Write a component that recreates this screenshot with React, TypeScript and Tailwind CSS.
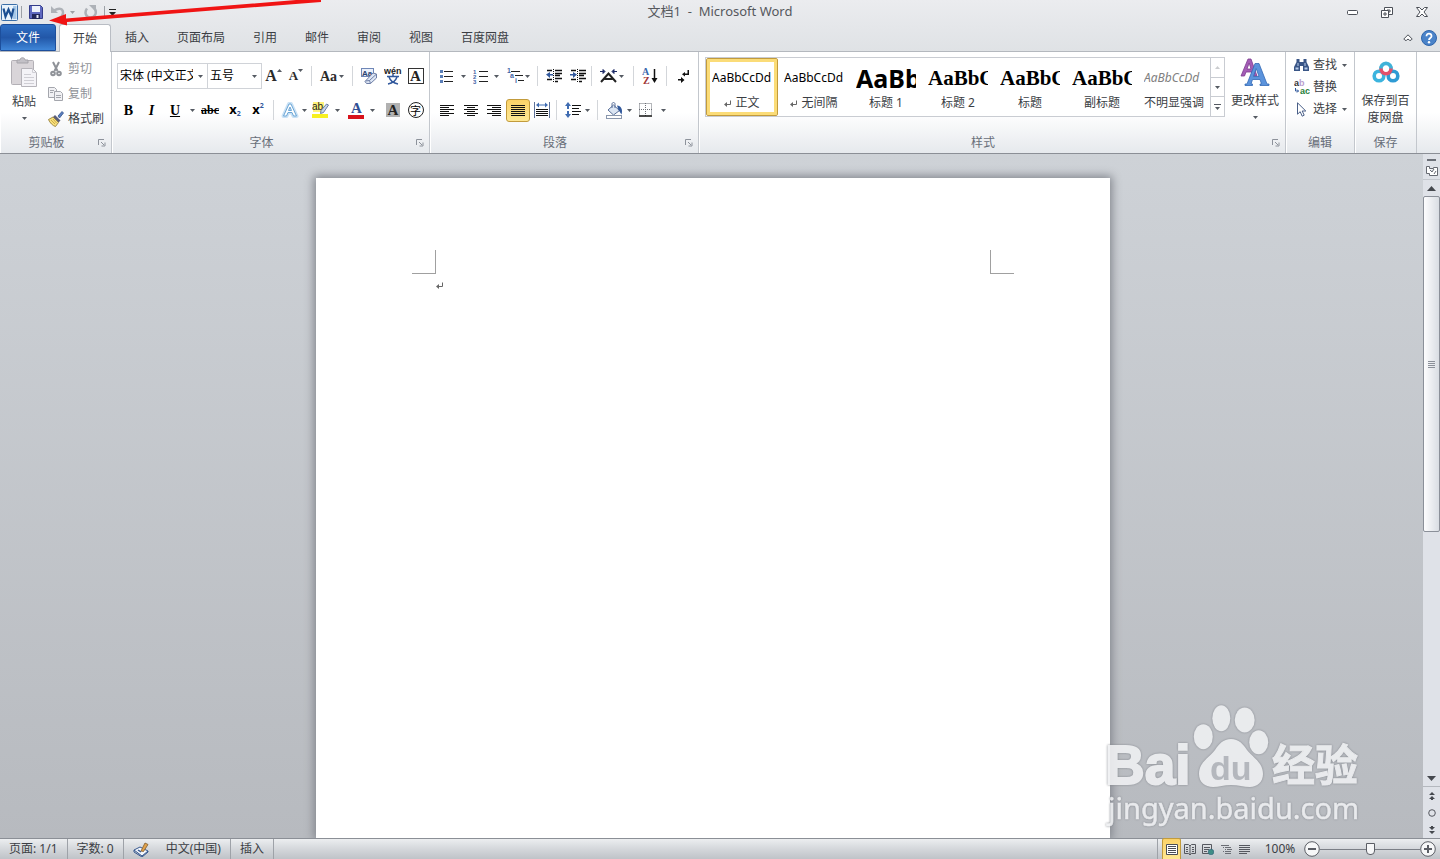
import React from "react";
import clsx from "clsx";

const menuTabs = ["插入", "页面布局", "引用", "邮件", "审阅", "视图", "百度网盘"];

const styleItems = [
  { name: "正文", mark: true, sample: "AaBbCcDd", look: "text-[12px]" },
  { name: "无间隔", mark: true, sample: "AaBbCcDd", look: "text-[12px]" },
  { name: "标题 1", sample: "AaBb", look: "text-[25px] font-bold" },
  { name: "标题 2", sample: "AaBbC", look: "text-[21px] font-bold font-['Liberation_Serif',serif]" },
  { name: "标题", sample: "AaBbC", look: "text-[21px] font-bold font-['Liberation_Serif',serif]" },
  { name: "副标题", sample: "AaBbC", look: "text-[21px] font-bold font-['Liberation_Serif',serif]" },
  { name: "不明显强调", sample: "AaBbCcDd", look: "text-[12px] italic text-[#808080]" },
];

function Caret({ className }: { className?: string }) {
  return (
    <svg className={clsx("shrink-0", className)} width="5" height="3" viewBox="0 0 5 3" fill="#555a62">
      <path d="M0 0h5L2.500 3z" />
    </svg>
  );
}

function Divider() {
  return <span className="h-5 w-px shrink-0 bg-[#d3d6da]" />;
}

interface ToolProps {
  label: string;
  className?: string;
  children: React.ReactNode;
}

function Tool({ label, className, children }: ToolProps) {
  return (
    <button
      type="button"
      aria-label={label}
      title={label}
      className={clsx("flex h-[23px] shrink-0 items-center justify-center", className)}
    >
      {children}
    </button>
  );
}

function Launcher({ label }: { label: string }) {
  return (
    <button type="button" aria-label={label} className="flex h-5 w-[18px] items-center justify-center">
      <svg width="8" height="8" viewBox="0 0 8 8" fill="none" stroke="#8d929b">
        <path d="M.5 6V.5H6M3 3l3 3M7 3.500V7H3.500" />
      </svg>
    </button>
  );
}

interface GroupProps {
  title: string;
  className?: string;
  launcher?: boolean;
  children: React.ReactNode;
}

function Group({ title, className, launcher, children }: GroupProps) {
  return (
    <section
      aria-label={title}
      className={clsx("flex flex-col border-r border-[#c3c7cd] shadow-[inset_1px_0_0_#ffffff]", className)}
    >
      <div className="h-[81px]">{children}</div>
      <div className="flex h-5 items-center">
        <h2 className="flex-1 text-center text-[#686e79]">{title}</h2>
        {launcher && <Launcher label={`${title}设置`} />}
      </div>
    </section>
  );
}

// 段落对齐图标
function Lines({ rows }: { rows: [number, number][] }) {
  return (
    <svg width="14" height="13" viewBox="0 0 14 13" fill="#111">
      {rows.map(([x, w], i) => (
        <rect key={i} x={x} y={i * 2 + 0.5} width={w} height="1" shapeRendering="crispEdges" />
      ))}
    </svg>
  );
}

function TitleBar() {
  return (
    <header className="grid h-6 grid-cols-[1fr_auto_1fr] items-center">
      <div className="flex items-center pl-px">
        <svg width="17" height="17" viewBox="0 0 17 17">
          <rect x=".5" y=".5" width="16" height="16" rx="1" fill="#e9f3fc" stroke="#3a6ea8" />
          <path d="M12 2h3.500v13H12z" fill="#a6c8e8" />
          <path d="M2.500 4.500l2 8 3-7 3 7 2-8" fill="none" stroke="#1c4f92" strokeWidth="2.200" />
        </svg>
        <span className="ml-[3px] h-3 w-px bg-[#9da1a7]" />
        <button type="button" aria-label="保存" className="ml-[7px]">
          <svg width="14" height="14" viewBox="0 0 14 14">
            <path d="M.5.5h11l2 2v11H.5z" fill="#5f69c0" stroke="#333c8a" />
            <path d="M3 1h8v6H3z" fill="#eef2fb" />
            <path d="M3 9h8v5H3z" fill="#23285c" />
            <path d="M7.500 10h2v3h-2z" fill="#e8eaf6" />
          </svg>
        </button>
        <button type="button" aria-label="撤消" className="ml-2">
          <svg width="14" height="14" viewBox="0 0 14 14" fill="none" stroke="#aeb2b8" strokeWidth="2.500">
            <path d="M3 5.500c5-3 9-2 9 2 0 3-2 5-5 6" />
            <path d="M0 1v7h7z" fill="#aeb2b8" stroke="none" />
          </svg>
        </button>
        <Caret className="ml-[5px] opacity-50" />
        <button type="button" aria-label="恢复" className="ml-[9px]">
          <svg width="13" height="14" viewBox="0 0 13 14" fill="none" stroke="#aeb2b8" strokeWidth="2.500">
            <path d="M3 3.500c-3 4-1 9 3.500 9s7-5 4-9" />
            <path d="M5 0h7v7z" fill="#aeb2b8" stroke="none" />
          </svg>
        </button>
        <span className="ml-[7px] h-3 w-px bg-[#9da1a7]" />
        <button type="button" aria-label="自定义快速访问工具栏" className="ml-1">
          <svg width="7" height="7" viewBox="0 0 7 7" fill="#222">
            <path d="M0 0h7v1H0zM0 3h7L3.500 7z" />
          </svg>
        </button>
      </div>
      <h1 className="text-[13px] text-[#55585d]">文档1&nbsp; -&nbsp; Microsoft Word</h1>
      <div className="flex items-center justify-end gap-[23px] pr-3">
        <button type="button" aria-label="最小化">
          <svg width="11" height="5" viewBox="0 0 11 5" fill="#fff" stroke="#4c5058">
            <rect x=".5" y=".5" width="10" height="4" rx="1" />
          </svg>
        </button>
        <button type="button" aria-label="还原">
          <svg width="12" height="11" viewBox="0 0 12 11" fill="#fff" stroke="#4c5058">
            <path d="M3.500.5h8v7h-8zM6 3h3v2H6z" />
            <path d="M.5 3.500h7v7h-7zM3 6h2v2H3z" />
          </svg>
        </button>
        <button type="button" aria-label="关闭">
          <svg width="12" height="10" viewBox="0 0 12 10" fill="#fff" stroke="#4c5058">
            <path d="M.5.5h3L6 3 8.500.5h3L8 5l3.500 4.500h-3L6 7 3.500 9.500h-3L4 5z" />
          </svg>
        </button>
      </div>
    </header>
  );
}

function TabBar() {
  return (
    <nav className="flex h-7 border-b border-[#b4b8be] text-[#3b3e44]">
      <button
        type="button"
        className="w-14 rounded-t-[3px] border border-[#1d4f9c] bg-linear-to-b from-[#2f6fc4] via-[#2257a8] to-[#3f86d8] text-white"
      >
        文件
      </button>
      <button
        type="button"
        className="relative -mb-px ml-[3px] w-[52px] rounded-t-[3px] border border-b-0 border-[#b9bdc4] bg-white"
      >
        开始
      </button>
      {menuTabs.map((tab) => (
        <button key={tab} type="button" className="px-[14px]">
          {tab}
        </button>
      ))}
      <div className="ml-auto flex items-center gap-2 pr-[3px]">
        <button type="button" aria-label="功能区最小化">
          <svg width="10" height="7" viewBox="0 0 10 7" fill="#fff" stroke="#4c5058">
            <path d="M.8 5L5 .8 9.200 5 8 6.300H6.500L5 5 3.500 6.300H2z" />
          </svg>
        </button>
        <button type="button" aria-label="帮助">
          <svg width="16" height="16" viewBox="0 0 16 16">
            <circle cx="8" cy="8" r="7.500" fill="#4a83c9" stroke="#2f65ab" />
            <path d="M5.500 6.200c0-3.600 5.200-3.400 5 0C10.400 8 8 8 8 10" fill="none" stroke="#fff" strokeWidth="1.800" />
            <circle cx="8" cy="12.300" r="1.200" fill="#fff" />
          </svg>
        </button>
      </div>
    </nav>
  );
}

function ClipboardGroup() {
  return (
    <Group title="剪贴板" launcher className="w-28 shrink-0">
      <div className="flex">
        <button type="button" className="flex w-12 flex-col items-center pt-[5px] text-[#3b3e44]">
          <svg width="28" height="32" viewBox="0 0 28 32">
            <rect x="1.500" y="3.500" width="22" height="24" rx="1" fill="#d9d5d9" stroke="#b3b0b6" />
            <path d="M7 3h3c0-3 5-3 5 0h3v3H7z" fill="#c3c1c7" stroke="#a5a3a9" />
            <path d="M11.500 11.500h11l4 4v14h-15z" fill="#f4f3f7" stroke="#b6b4ba" />
            <path d="M22.500 11.500v4h4M14 17.500h7M14 20.500h10M14 23.500h10M14 26.500h10" fill="none" stroke="#cfced4" />
          </svg>
          <span className="mt-[5px] leading-4">粘贴</span>
          <Caret className="mt-[7px]" />
        </button>
        <div className="flex flex-col pt-[4px] text-[#8f9297]">
          <button type="button" className="flex h-[25px] items-center gap-1">
            <svg width="16" height="16" viewBox="0 0 16 16" fill="none" stroke="#8f9298" strokeWidth="2">
              <path d="M5 1l4.500 9M11 1L6.500 10" />
              <circle cx="5" cy="12.500" r="1.800" />
              <circle cx="11" cy="12.500" r="1.800" />
            </svg>
            剪切
          </button>
          <button type="button" className="flex h-[25px] items-center gap-1">
            <svg width="16" height="16" viewBox="0 0 16 16" fill="#f1f1f4" stroke="#a4a6ad">
              <path d="M.5 1.500h6l2 2v8h-8z" />
              <path d="M6.500 5.500h6l2 2v7h-8zM8 9.500h5M8 11.500h5M2 4.500h4M2 6.500h3" />
            </svg>
            复制
          </button>
          <button type="button" className="flex h-[25px] items-center gap-1 text-[#3b3e44]">
            <svg width="16" height="16" viewBox="0 0 16 16">
              <path d="M10 5l4-4.500L15.500 2l-4 5z" fill="#5a7fc0" stroke="#35538c" strokeWidth=".8" />
              <path d="M7 4l5.500 5.500-2 2L5 6z" fill="#5c5f78" />
              <path d="M5 6l5.500 5.500L7.500 15.500C5 15 1.500 11.500.5 8.500z" fill="#f6df7c" stroke="#8a7434" strokeWidth=".8" />
              <path d="M3 9l4 4M5 8l3.500 4" stroke="#d0ae48" />
            </svg>
            格式刷
          </button>
        </div>
      </div>
    </Group>
  );
}

function FontGroup() {
  return (
    <Group title="字体" launcher className="w-[318px] shrink-0">
      <div className="mt-[11px] flex h-[26px] items-center pl-[5px]">
        <div className="relative">
          <select
            aria-label="字体名称"
            className="block h-[26px] w-[91px] appearance-none border border-[#d0d3d8] bg-white pr-[14px] pl-[2px] text-black"
          >
            <option>宋体 (中文正文)</option>
          </select>
          <Caret className="pointer-events-none absolute top-3 right-[5px]" />
        </div>
        <div className="relative">
          <select
            aria-label="字号"
            className="block h-[26px] w-[54px] appearance-none border border-l-0 border-[#d0d3d8] bg-white pl-[2px] text-black"
          >
            <option>五号</option>
          </select>
          <Caret className="pointer-events-none absolute top-3 right-[5px]" />
        </div>
        <Tool label="增大字体" className="w-[23px] font-['Liberation_Serif',serif] text-[16px] font-bold text-[#2b2b2b]">
          A<Caret className="mb-3 rotate-180" />
        </Tool>
        <Tool label="缩小字体" className="w-[22px] font-['Liberation_Serif',serif] text-[13px] font-bold text-[#2b2b2b]">
          A<Caret className="mb-3" />
        </Tool>
        <span className="w-1" />
        <Divider />
        <Tool label="更改大小写" className="w-10 gap-[2px] font-['Liberation_Serif',serif] text-[14px] font-bold text-[#2b2b2b]">
          Aa
          <Caret />
        </Tool>
        <Divider />
        <span className="w-1" />
        <Tool label="清除格式" className="w-6">
          <svg width="17" height="17" viewBox="0 0 17 17">
            <rect x=".5" y=".5" width="12" height="8" fill="#eaf0fb" stroke="#6f87b7" />
            <text x="1" y="7.500" fontSize="8" fontWeight="bold" fill="#28426f" fontFamily="Liberation Sans, sans-serif">Aa</text>
            <path d="M12 5l3.500 1v4L9.500 15.500H5.500L4 13.500z" fill="#dde6f5" stroke="#6f7fa6" />
            <path d="M4.500 13l4-.5 6.500-6M8.500 12.500l1 3" fill="none" stroke="#6f7fa6" />
          </svg>
        </Tool>
        <Tool label="拼音指南" className="w-[23px]">
          <svg width="18" height="18" viewBox="0 0 18 18">
            <text x="0" y="6.500" fontSize="9" fontWeight="bold" fill="#222" fontFamily="Liberation Sans, sans-serif">wén</text>
            <path d="M9 7v2.500M3 9.500h12M13 10c-1 3-4 6-9 7M5 10c1 3 4 6 9 7" fill="none" stroke="#31589c" strokeWidth="1.500" />
          </svg>
        </Tool>
        <Tool label="字符边框" className="w-[23px]">
          <span className="flex size-4 items-center justify-center border border-[#333] font-['Liberation_Serif',serif] text-[15px] leading-none font-bold text-[#222]">
            A
          </span>
        </Tool>
      </div>
      <div className="mt-[9px] flex h-6 items-center pl-[5px] text-black">
        <Tool label="加粗" className="w-[23px] font-['Liberation_Serif',serif] text-[14px] font-bold">
          B
        </Tool>
        <Tool label="倾斜" className="w-[23px] font-['Liberation_Serif',serif] text-[14px] font-bold italic">
          I
        </Tool>
        <Tool label="下划线" className="w-6 font-['Liberation_Serif',serif] text-[14px] font-bold underline">
          U
        </Tool>
        <Tool label="下划线样式" className="w-[10px]">
          <Caret />
        </Tool>
        <Tool label="删除线" className="w-[26px] font-['Liberation_Serif',serif] text-[12px] font-bold line-through">
          abc
        </Tool>
        <Tool label="下标" className="w-6 text-[13px] font-bold">
          x<span className="mt-2 text-[7px] text-[#31589c]">2</span>
        </Tool>
        <Tool label="上标" className="w-[22px] text-[13px] font-bold">
          x<span className="mb-2 text-[7px] text-[#31589c]">2</span>
        </Tool>
        <span className="w-1" />
        <Divider />
        <span className="w-1" />
        <Tool label="文本效果" className="w-[31px] gap-[3px]">
          <svg width="18" height="18" viewBox="0 0 18 18" fill="none">
            <path d="M2.500 15L8 3h2l5.500 12h-3L11 11.500H7L5.500 15z" stroke="#c9e1f5" strokeWidth="4" strokeLinejoin="round" />
            <path d="M2.500 15L8 3h2l5.500 12h-3L11 11.500H7L5.500 15z" fill="#fff" stroke="#6ba6d6" strokeLinejoin="round" />
            <path d="M9 6l1.500 3.500h-3z" fill="#c9e1f5" stroke="#6ba6d6" />
          </svg>
          <Caret />
        </Tool>
        <Tool label="突出显示" className="w-[34px] gap-[5px]">
          <svg width="18" height="18" viewBox="0 0 18 18">
            <rect x="1" y="1" width="11" height="10" fill="#fff27a" />
            <text x="0" y="9" fontSize="10" fill="#222" fontFamily="Liberation Sans, sans-serif">ab</text>
            <path d="M14.500 3l2 1-5 7.500-3 1 .5-3z" fill="#c7d5ec" stroke="#4f658f" strokeWidth=".8" />
            <rect x="0" y="13" width="16" height="4" fill="#f7f021" />
          </svg>
          <Caret />
        </Tool>
        <Tool label="字体颜色" className="w-9 gap-[6px]">
          <svg className="overflow-visible" width="16" height="18" viewBox="0 0 16 18">
            <text x="3" y="12" fontSize="15" fontWeight="bold" fill="#2f4f94" fontFamily="Liberation Serif, serif">A</text>
            <rect x="0" y="14" width="16" height="4" fill="#d8121b" />
          </svg>
          <Caret />
        </Tool>
        <span className="w-[3px]" />
        <Tool label="字符底纹" className="w-[22px]">
          <span className="flex size-[14px] items-center justify-center bg-[#b1b1b1] font-['Liberation_Serif',serif] text-[15px] leading-none font-bold text-[#222]">
            A
          </span>
        </Tool>
        <Tool label="带圈字符" className="w-[23px]">
          <span className="flex size-4 items-center justify-center rounded-full border border-[#222] text-[11px] leading-none">
            字
          </span>
        </Tool>
      </div>
    </Group>
  );
}

function ParagraphGroup() {
  return (
    <Group title="段落" launcher className="w-[269px] shrink-0">
      <div className="mt-[11px] flex h-[26px] items-center pl-[9px]">
        <Tool label="项目符号" className="w-[34px] justify-start gap-2">
          <svg width="14" height="14" viewBox="0 0 14 14">
            <path d="M5 2.500h9M5 7.500h9M5 12.500h9" stroke="#222" />
            <path d="M1 1h3v3H1zM1 6h3v3H1zM1 11h3v3H1z" fill="#5b7fb8" />
          </svg>
          <Caret />
        </Tool>
        <Tool label="编号" className="w-[34px] justify-start gap-[6px]">
          <svg width="15" height="15" viewBox="0 0 15 15">
            <path d="M6 2.500h9M6 7.500h9M6 12.500h9" stroke="#222" />
            <g fontSize="6" fontWeight="bold" fill="#3f64a5" fontFamily="Liberation Sans, sans-serif">
              <text x="0" y="5">1</text>
              <text x="0" y="10">2</text>
              <text x="0" y="15">3</text>
            </g>
          </svg>
          <Caret />
        </Tool>
        <Tool label="多级列表" className="w-7 justify-start">
          <svg width="18" height="16" viewBox="0 0 18 16">
            <path d="M4 3.500h9M8 7.500h8M11 12.500h6" stroke="#222" />
            <g fontSize="7" fontWeight="bold" fill="#3f64a5" fontFamily="Liberation Sans, sans-serif">
              <text x="0" y="5">1</text>
              <text x="3" y="10">a</text>
              <text x="8" y="15">i</text>
            </g>
          </svg>
          <Caret />
        </Tool>
        <span className="w-[2px]" />
        <Divider />
        <span className="w-1" />
        <Tool label="减少缩进量" className="w-6">
          <svg width="16" height="14" viewBox="0 0 16 14">
            <path d="M1 1.500h5M9 1.500h7M9 4.500h7M9 6.500h5M1 10.500h5M9 9.500h7M9 12.500h3" stroke="#111" strokeWidth="1.500" />
            <path d="M7.500 0v14" stroke="#111" strokeDasharray="1 1" />
            <path d="M0 5.500L4 3v2h3v1.500H4V9z" fill="#31589c" />
          </svg>
        </Tool>
        <Tool label="增加缩进量" className="w-[23px]">
          <svg width="16" height="14" viewBox="0 0 16 14">
            <path d="M1 1.500h5M9 1.500h7M9 4.500h7M9 6.500h5M1 10.500h5M9 9.500h7M9 12.500h3" stroke="#111" strokeWidth="1.500" />
            <path d="M7.500 0v14" stroke="#111" strokeDasharray="1 1" />
            <path d="M7 5.500L3 3v2H0v1.500h3V9z" fill="#31589c" />
          </svg>
        </Tool>
        <span className="w-[2px]" />
        <Divider />
        <span className="w-1" />
        <Tool label="中文版式" className="w-8 gap-[2px]">
          <svg width="17" height="14" viewBox="0 0 17 14" fill="none" stroke="#222" strokeWidth="2">
            <path d="M1 13L8.500 4.500 16 13M4.500 10h8" />
            <path d="M5 2.500L3 .5v4zM12 2.500l2-2v4z" fill="#1d2b66" stroke="#1d2b66" strokeWidth="1" />
            <path d="M0 2.500h4M13 2.500h4" stroke="#1d2b66" strokeWidth="1" />
          </svg>
          <Caret />
        </Tool>
        <span className="w-[5px]" />
        <Divider />
        <span className="w-1" />
        <Tool label="排序" className="w-6">
          <svg width="16" height="18" viewBox="0 0 16 18">
            <g fontSize="10" fontWeight="bold" fontFamily="Liberation Serif, serif">
              <text x="0" y="8" fill="#3766ad">A</text>
              <text x="1" y="17" fill="#a03437">Z</text>
            </g>
            <path d="M12.500 2v12" stroke="#111" strokeWidth="1.500" />
            <path d="M9.500 11h6l-3 5z" fill="#111" />
          </svg>
        </Tool>
        <span className="w-1" />
        <Divider />
        <span className="w-1" />
        <Tool label="显示编辑标记" className="w-6">
          <svg width="13" height="14" viewBox="0 0 13 14" fill="#111">
            <path d="M10.500 1H12v5H8v1.500L5 5.300 8 3v1.500h2.500zM1 10h3V8l3.500 3L4 14v-2.500H1z" />
          </svg>
        </Tool>
      </div>
      <div className="mt-[9px] flex h-6 items-center pl-[5px]">
        <Tool label="左对齐" className="w-6">
          <Lines rows={[[0, 14], [0, 9], [0, 14], [0, 9], [0, 14], [0, 9]]} />
        </Tool>
        <Tool label="居中" className="w-[23px]">
          <Lines rows={[[0, 14], [3, 8], [0, 14], [3, 8], [0, 14], [3, 8]]} />
        </Tool>
        <Tool label="右对齐" className="w-6">
          <Lines rows={[[0, 14], [5, 9], [0, 14], [5, 9], [0, 14], [5, 9]]} />
        </Tool>
        <Tool label="两端对齐" className="w-6 rounded-[3px] border border-[#c29b3c] bg-linear-to-b from-[#fbd267] to-[#fee894]">
          <Lines rows={[[0, 14], [0, 14], [0, 14], [0, 14], [0, 14], [0, 14]]} />
        </Tool>
        <Tool label="分散对齐" className="w-[23px]">
          <svg width="16" height="16" viewBox="0 0 16 16">
            <path d="M.5 0v16M15.500 0v16" stroke="#5c7199" />
            <path d="M2 3L5 .5v2h6v-2L14 3l-3 2.500v-2H5v2z" fill="#3f6cb2" />
            <path d="M2 7.500h12M2 9.500h12M2 11.500h12M2 13.500h12" stroke="#111" />
          </svg>
        </Tool>
        <span className="w-[3px]" />
        <Divider />
        <span className="w-1" />
        <Tool label="行距" className="w-8 gap-1">
          <svg width="16" height="16" viewBox="0 0 16 16">
            <path d="M3 0l3 4H4v3H2V4H0zM3 16l3-4H4V9H2v3H0z" fill="#3f6cb2" />
            <path d="M7 3.500h9M7 6.500h7M7 9.500h9M7 12.500h7" stroke="#111" />
          </svg>
          <Caret />
        </Tool>
        <span className="w-1" />
        <Divider />
        <span className="w-1" />
        <Tool label="底纹" className="w-[34px] gap-1">
          <svg width="17" height="17" viewBox="0 0 17 17">
            <path d="M7.500 3l6 5.500-6 4.500L2 8z" fill="#dbe5f3" stroke="#5a7099" />
            <path d="M6 6V2c0-2 3-2 3 0v4" fill="none" stroke="#5a7099" />
            <path d="M11 3.500c4 0 6 4 4.500 9L12.500 8z" fill="#31589c" />
            <rect x=".5" y="13.500" width="15" height="3" fill="#fff" stroke="#8a97ad" />
          </svg>
          <Caret />
        </Tool>
        <Tool label="边框" className="w-[33px] gap-[9px]">
          <svg width="13" height="14" viewBox="0 0 13 14" fill="none" stroke="#6b6f76" strokeDasharray="1 1">
            <path d="M.5.5h12v12M.5.5v12M6.500 0v13M0 6.500h13" />
            <path d="M0 13h13" stroke="#111" strokeDasharray="none" strokeWidth="1.500" />
          </svg>
          <Caret />
        </Tool>
      </div>
    </Group>
  );
}

function ParaMark() {
  return (
    <svg width="7" height="8" viewBox="0 0 7 8" fill="none" stroke="#666">
      <path d="M6.500.5v4H1.500" />
      <path d="M0 4.500L3 2v5z" fill="#666" stroke="none" />
    </svg>
  );
}

function StylesGroup() {
  return (
    <Group title="样式" launcher className="min-w-0 flex-1">
      <div className="flex items-start pl-[6px]">
        <div className="mt-[5px] flex h-[60px] min-w-0 flex-1 border border-[#c9ccd2] bg-white">
          <div className="flex min-w-0 flex-1 overflow-hidden">
            {styleItems.map((item, i) => (
              <button
                key={item.name}
                type="button"
                className={clsx(
                  "relative flex h-[58px] w-[72px] shrink-0 flex-col items-center text-black",
                  i === 0 &&
                    "before:absolute before:inset-0 before:rounded-[2px] before:border before:border-[#c29b3c] before:shadow-[inset_0_0_0_3px_#fbdc78]"
                )}
              >
                <span
                  className={clsx(
                    "flex w-[60px] flex-1 items-center overflow-hidden pt-[2px] leading-8 whitespace-nowrap",
                    item.look
                  )}
                >
                  {item.sample}
                </span>
                <span className="flex h-[21px] items-start gap-1 leading-4 whitespace-nowrap text-[#3b3e44]">
                  {item.mark && (
                    <span className="mt-[5px]">
                      <ParaMark />
                    </span>
                  )}
                  {item.name}
                </span>
              </button>
            ))}
          </div>
          <div className="flex w-[14px] shrink-0 flex-col divide-y divide-[#c9ccd2] border-l border-[#c9ccd2]">
            <button type="button" aria-label="上一行" className="flex flex-1 items-center justify-center">
              <Caret className="rotate-180 opacity-30" />
            </button>
            <button type="button" aria-label="下一行" className="flex flex-1 items-center justify-center">
              <Caret />
            </button>
            <button type="button" aria-label="其他样式" className="flex flex-1 flex-col items-center justify-center gap-[2px]">
              <span className="h-px w-[7px] bg-[#555a62]" />
              <Caret />
            </button>
          </div>
        </div>
        <button type="button" className="flex w-[60px] shrink-0 flex-col items-center pt-[6px] text-[#3b3e44]">
          <svg width="30" height="29" viewBox="0 0 30 29">
            <path d="M1 18L8 1h3l6 17h-4l-1.200-4H6l-1.500 4zM7 11h4L9.200 5z" fill="#a45db5" stroke="#7c3b90" strokeWidth=".8" fillRule="evenodd" />
            <path d="M5 27.500v-1.500h2L15 5.500h4L27 26h2v1.500h-9V26h1.500L20 21.500h-7.500L11 26h1.500v1.500zM13.500 18.500h5.500L16.200 10.500z" fill="#5b93dc" stroke="#336ab5" strokeWidth=".8" fillRule="evenodd" />
          </svg>
          <span className="mt-[6px] leading-4">更改样式</span>
          <Caret className="mt-[7px]" />
        </button>
      </div>
    </Group>
  );
}

function EditGroup() {
  return (
    <Group title="编辑" className="w-[69px] shrink-0">
      <div className="flex flex-col pt-[2px] pl-2 text-[#3b3e44]">
        <button type="button" className="flex h-[22px] items-center">
          <svg width="15" height="14" viewBox="0 0 15 14" fill="#3a5687">
            <path d="M2.500 1h3v3h4V1h3v3l2.500 5v4H9V8H6v5H0V9l2.500-5z" />
            <path d="M1.500 9.500h3v2h-3zM10.500 9.500h3v2h-3zM3.500 5h1v3h-1zM10.500 5h1v3h-1z" fill="#b9cdec" />
          </svg>
          <span className="ml-1">查找</span>
          <Caret className="ml-[5px]" />
        </button>
        <button type="button" className="flex h-[22px] items-center">
          <svg width="16" height="16" viewBox="0 0 16 16">
            <g fontSize="9" fontWeight="bold" fontFamily="Liberation Sans, sans-serif">
              <text x="0" y="7" fill="#333">a</text>
              <text x="5" y="7" fill="#b9a0cf">b</text>
              <text x="6" y="15" fill="#27803a">ac</text>
            </g>
            <path d="M1.500 9v3h3M3 10.500L4.500 12 3 13.500" fill="none" stroke="#31589c" />
          </svg>
          <span className="ml-[3px]">替换</span>
        </button>
        <button type="button" className="flex h-[22px] items-center">
          <svg width="15" height="15" viewBox="0 0 15 15">
            <path d="M3.500.8v11.400l2.700-2.500 2 4.500 2-1-2-4.200h3.600z" fill="#fff" stroke="#4a5f88" />
          </svg>
          <span className="ml-1">选择</span>
          <Caret className="ml-[5px]" />
        </button>
      </div>
    </Group>
  );
}

function SaveGroup() {
  return (
    <Group title="保存" className="mr-[23px] w-[62px] shrink-0">
      <button type="button" className="flex w-full flex-col items-center pt-2 text-[#3b3e44]">
        <svg width="28" height="25" viewBox="0 0 28 25" fill="none" strokeWidth="3.600">
          <circle cx="7" cy="16" r="4.800" stroke="#3cb4de" />
          <circle cx="21" cy="16" r="4.800" stroke="#2f9bd4" />
          <path d="M9 9.500a5.100 5.100 0 1 1 10 0" stroke="#3fb2d8" />
          <path d="M9 8.500c0 7 10 7 10 0" stroke="#e3506a" />
        </svg>
        <span className="mt-[7px] w-[50px] text-center leading-[17px]">保存到百度网盘</span>
      </button>
    </Group>
  );
}

function ScrollBar() {
  return (
    <aside className="flex w-[17px] shrink-0 flex-col items-center bg-[#dfe2e8]">
      <span className="mt-[5px] h-[2px] w-[9px] bg-[#6c7078]" />
      <button type="button" aria-label="标尺" className="mt-[2px] flex h-[17px] w-full items-center justify-center border-b border-[#c3c7cd]">
        <svg width="12" height="12" viewBox="0 0 12 12" fill="#fff" stroke="#666a72">
          <path d="M.5 1.500h3v2h4v-1h4v8h-8v-2h-3zM4 5l2 2 2-3M8 9l2-3" />
        </svg>
      </button>
      <button type="button" aria-label="向上滚动" className="flex h-4 w-full items-center justify-center">
        <svg width="9" height="5" viewBox="0 0 9 5" fill="#45484e">
          <path d="M0 5h9L4.500 0z" />
        </svg>
      </button>
      <div className="flex w-full flex-1 flex-col">
        <div className="flex flex-7 flex-col items-center justify-center gap-px rounded-[2px] border border-[#8b9099] bg-linear-to-r from-[#fdfdfe] to-[#d9dde3]">
          <span className="h-px w-[7px] bg-[#8b9099]" />
          <span className="h-px w-[7px] bg-[#8b9099]" />
          <span className="h-px w-[7px] bg-[#8b9099]" />
          <span className="h-px w-[7px] bg-[#8b9099]" />
        </div>
        <div className="flex-5" />
      </div>
      <button type="button" aria-label="向下滚动" className="flex h-4 w-full items-center justify-center border-b border-[#b4b8be]">
        <svg width="9" height="5" viewBox="0 0 9 5" fill="#45484e">
          <path d="M0 0h9L4.500 5z" />
        </svg>
      </button>
      <button type="button" aria-label="前一页" className="flex h-[17px] items-center">
        <svg width="6" height="8" viewBox="0 0 6 8" fill="#45484e">
          <path d="M0 3h6L3 0zM0 7h6L3 4zM2 7h2v1H2z" />
        </svg>
      </button>
      <button type="button" aria-label="选择浏览对象" className="flex h-[17px] items-center">
        <svg width="8" height="8" viewBox="0 0 8 8" fill="none" stroke="#55585f">
          <circle cx="4" cy="4" r="3.300" />
        </svg>
      </button>
      <button type="button" aria-label="下一页" className="flex h-[17px] items-center">
        <svg width="6" height="8" viewBox="0 0 6 8" fill="#45484e">
          <path d="M2 0h2v1H2zM0 1h6L3 4zM0 5h6L3 8z" />
        </svg>
      </button>
    </aside>
  );
}

// 右下角百度经验水印
function Watermark() {
  return (
    <svg
      className="pointer-events-none absolute right-[53px] bottom-2 drop-shadow-[0_0_1px_#80848b]"
      width="270"
      height="130"
      viewBox="0 0 270 130"
      fill="#eff0f2"
      opacity=".9"
    >
      <g fontWeight="bold" stroke="#eff0f2">
        <text x="5" y="84" fontSize="55" strokeWidth="2" fontFamily="Liberation Sans, sans-serif">Bai</text>
        <text x="172" y="81" fontSize="43" strokeWidth="1" fontFamily="Noto Sans CJK SC, sans-serif">经验</text>
      </g>
      <ellipse cx="103.300" cy="36.700" rx="9.500" ry="12.500" />
      <ellipse cx="121.300" cy="18.300" rx="9" ry="13" />
      <ellipse cx="144.700" cy="20" rx="10" ry="12.500" />
      <ellipse cx="158.700" cy="42.300" rx="9.500" ry="12" />
      <path d="M131 39c8 0 12 5 16 11 5 7 16 12 16 24 0 8-6 13-13 13-6 0-12-2-19-2s-12 2-18 2c-8 0-14-5-14-13 0-12 10-16 16-24 4-6 8-11 16-11z" />
      <text x="110" y="80" fontSize="34" fontWeight="bold" fill="#b4b7bd" fontFamily="Liberation Sans, sans-serif">du</text>
      <text x="8" y="119" fontSize="29" stroke="#eff0f2" strokeWidth=".5" fontFamily="Noto Sans, sans-serif">jingyan.baidu.com</text>
    </svg>
  );
}

function StatusBar() {
  return (
    <footer className="flex h-[21px] shrink-0 items-center border-t border-[#8b8f96] bg-linear-to-b from-[#eceef0] via-[#d4d7db] to-[#bfc3c8] text-[#3b3e44]">
      <div className="flex h-full items-center divide-x divide-[#9ea2a8] *:flex *:h-full *:items-center *:px-[9px]">
        <span>页面: 1/1</span>
        <span>字数: 0</span>
        <span className="gap-[17px]">
          <svg width="16" height="15" viewBox="0 0 16 15">
            <path d="M1 8l6-3 8 4-6 5z" fill="#f4f7fc" stroke="#35578f" />
            <path d="M1 8v2l8 5 6-5V9" fill="none" stroke="#35578f" />
            <path d="M8 9l4-8 3 1.500-4.500 7z" fill="#e2a24a" stroke="#7d5a2c" strokeWidth=".8" />
            <path d="M5 8l3 2" stroke="#35578f" strokeWidth="1.500" />
          </svg>
          中文(中国)
        </span>
        <span>插入</span>
        <span />
      </div>
      <div className="ml-auto flex h-full items-center border-l border-[#9ea2a8] pl-1">
        <Tool label="页面视图" className="h-[19px] w-[19px] rounded-[2px] border border-[#c29b3c] bg-linear-to-b from-[#fbd267] to-[#fee894]">
          <svg width="12" height="11" viewBox="0 0 12 11" fill="#fff" stroke="#4a4d54">
            <path d="M.5.5h11v10H.5zM2 2.500h8M2 4.500h8M2 6.500h8M2 8.500h8" />
          </svg>
        </Tool>
        <Tool label="阅读版式视图" className="w-[18px]">
          <svg width="12" height="11" viewBox="0 0 12 11" fill="none" stroke="#55585f">
            <path d="M.5.500h4L6 2 7.500.500h4v9h-4L6 11 4.500 9.500h-4zM6 2v8M2 3.500h2M2 5.500h2M2 7.500h2M8 3.500h2M8 5.500h2M8 7.500h2" />
          </svg>
        </Tool>
        <Tool label="Web版式视图" className="w-[18px]">
          <svg width="12" height="11" viewBox="0 0 12 11" fill="none" stroke="#55585f">
            <path d="M.5.500h9v9h-9zM2 3.500h6M2 5.500h5M2 7.500h3" />
            <circle cx="9" cy="8" r="2.800" fill="#3f8d86" stroke="#2d5f78" strokeWidth=".6" />
          </svg>
        </Tool>
        <Tool label="大纲视图" className="w-[18px]">
          <svg width="11" height="10" viewBox="0 0 11 10" stroke="#6a6d74">
            <path d="M0 1.500h8M2 3.500h1M4 3.500h6M4 5.500h1M6 5.500h5M2 7.500h1M4 7.500h6M4 9.500h6" />
          </svg>
        </Tool>
        <Tool label="草稿" className="w-[19px]">
          <svg width="11" height="10" viewBox="0 0 11 10" stroke="#55585f">
            <path d="M0 1.500h11M0 3.500h11M0 5.500h11M0 7.500h11M0 9.500h8" />
          </svg>
        </Tool>
        <button type="button" className="ml-[6px] w-10 text-center">
          100%
        </button>
        <button type="button" aria-label="缩小" className="ml-1">
          <svg width="16" height="16" viewBox="0 0 16 16" fill="#f6f7f8" stroke="#5b5e65">
            <circle cx="8" cy="8" r="7.300" />
            <path d="M4 8h8" strokeWidth="2" />
          </svg>
        </button>
        <input
          type="range"
          min={0}
          max={200}
          defaultValue={100}
          aria-label="显示比例"
          className="h-[14px] w-[100px] appearance-none bg-[linear-gradient(#7b7f86,#7b7f86)] bg-[length:100%_1px] bg-center bg-no-repeat [&::-webkit-slider-thumb]:h-3 [&::-webkit-slider-thumb]:w-[9px] [&::-webkit-slider-thumb]:appearance-none [&::-webkit-slider-thumb]:rounded-b-[4px] [&::-webkit-slider-thumb]:border [&::-webkit-slider-thumb]:border-[#5b5e65] [&::-webkit-slider-thumb]:bg-[#f6f7f8]"
        />
        <button type="button" aria-label="放大" className="mr-1">
          <svg width="16" height="16" viewBox="0 0 16 16" fill="#f6f7f8" stroke="#5b5e65">
            <circle cx="8" cy="8" r="7.300" />
            <path d="M4 8h8M8 4v8" strokeWidth="2" />
          </svg>
        </button>
      </div>
    </footer>
  );
}

export default function App() {
  return (
    <div className="relative flex h-screen flex-col overflow-hidden bg-[#e2e5e8] font-['Noto_Sans','Noto_Sans_CJK_SC',sans-serif] text-[12px]">
      <div className="shrink-0 bg-linear-to-b from-[#ebecef] to-[#dfe2e5]">
        <TitleBar />
        <TabBar />
      </div>

      {/* 功能区 */}
      <div className="flex shrink-0 border-b border-[#8b8f96] bg-linear-to-b from-white from-60% to-[#e6e9ed]">
        <ClipboardGroup />
        <FontGroup />
        <ParagraphGroup />
        <StylesGroup />
        <EditGroup />
        <SaveGroup />
      </div>

      {/* 文档区域 */}
      <div className="relative flex min-h-0 flex-1">
        <main className="relative flex min-w-0 flex-1 justify-center overflow-hidden bg-linear-to-b from-[#ced2d7] to-[#b7babf] pt-6 pl-[3px]">
          <article className="w-[794px] shrink-0 bg-white pt-[72px] shadow-[0_0_9px_2px_#80848b]">
            <div className="flex justify-between px-24">
              <span className="size-6 border-r border-b border-[#a0a0a0]" />
              <span className="size-6 border-b border-l border-[#a0a0a0]" />
            </div>
            <div className="px-[120px] pt-2">
              <ParaMark />
            </div>
          </article>
          <Watermark />
        </main>
        <ScrollBar />
      </div>

      <StatusBar />

      {/* 指向保存按钮的红色箭头 */}
      <svg className="pointer-events-none absolute top-0 left-0" width="322" height="28" viewBox="0 0 322 28" fill="#f01414">
        <path d="M49 20.500L66 14v4.500L321-2v4L67 22v3.500z" />
      </svg>
    </div>
  );
}
